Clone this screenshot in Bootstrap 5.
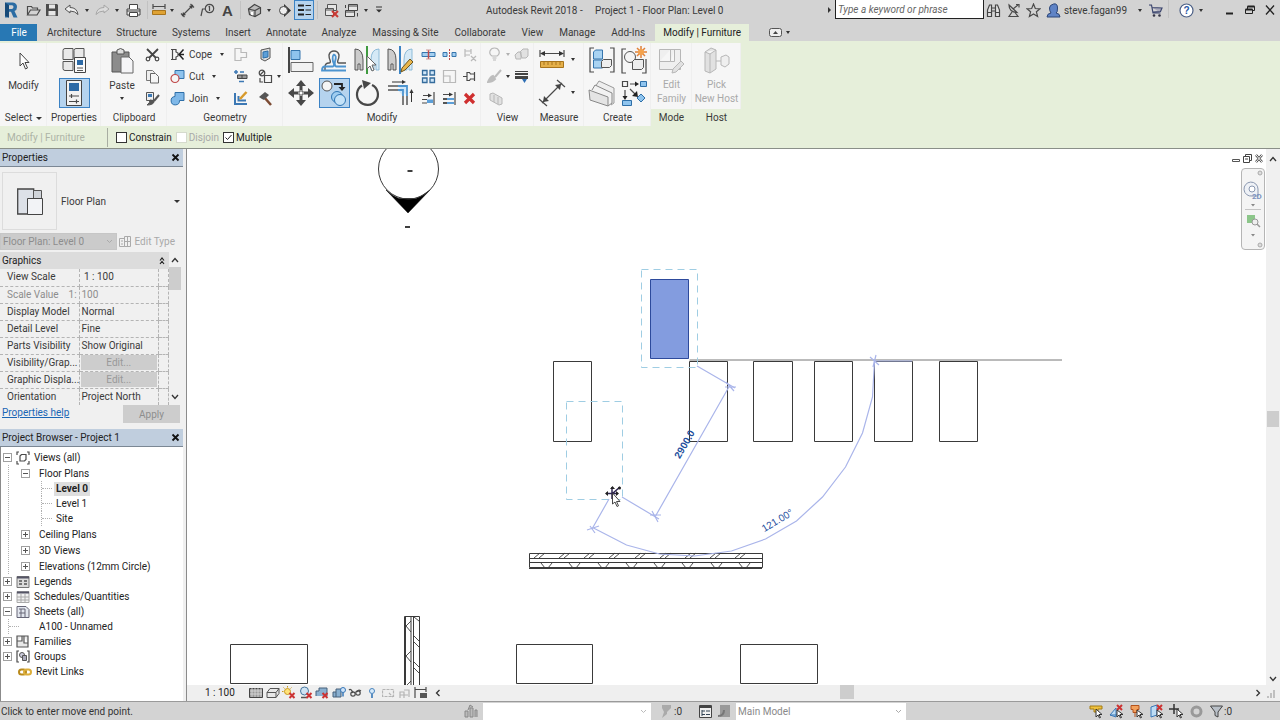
<!DOCTYPE html>
<html lang="en">
<head>
<meta charset="utf-8">
<meta name="viewport" content="width=device-width, initial-scale=1">
<title>Autodesk Revit 2018 - Project 1 - Floor Plan: Level 0</title>
<link href="https://cdn.jsdelivr.net/npm/bootstrap@5.3.0/dist/css/bootstrap.min.css" rel="stylesheet">
<style>
:root{--chrome:#d3d3d3;--ctx:#e6efda;--panel:#f6f6f6;--ink:#3a3a3a;--dim:#a9a9a9}
body{font:10px/15px Roboto,"Open Sans",sans-serif;color:var(--ink);background:#f0f0f0;overflow:hidden}
button{font:inherit;color:inherit;background:none;border:0;padding:0}
svg{display:block;flex:none}
.tri{display:block;width:0;height:0;border:3px solid transparent;border-top-color:#333;border-bottom:0;flex:none}
.tri-sm{border-width:2px;border-top-width:3px}
.i15{width:15px;height:15px}
.i28{width:28px;height:28px}
.s{fill:none;stroke:#4a4a4a;stroke-width:1.2}
.off{opacity:.35}
/* title bar */
.titlebar{height:24px;background:var(--chrome)}
.qat>button,.acct>button{height:20px;width:20px;display:flex;align-items:center;justify-content:center}
.qat .w-c,.acct .w-c{width:10px}
.qat .w-l{width:22px}
.qat .w-s{width:16px}
.acct .first-win{margin-left:14px}
.vsep{width:7px;height:18px;background:linear-gradient(#c2c2c2,#c2c2c2) 3px 0/1px 100% no-repeat}
.picked{background:#b5d3ee;box-shadow:inset 0 0 0 1px #3b82c4}
.apptitle{left:486px;top:3px;white-space:pre}
.search{width:149px;height:19px;border:1px solid #222;border-top:0;font:italic 10px Roboto,sans-serif;padding:0 2px;background:#fff}
.search::placeholder{color:#666;opacity:1}
/* tabs */
.tabs{height:17px;background:var(--chrome)}
.tabs a{display:block;padding:1px 8px 0;line-height:16px;height:17px;color:var(--ink);text-decoration:none}
.tabs a:nth-child(-n+6){padding-right:7px}
.tabs .file{width:37px;background:#2878b4;color:#fff;text-align:center;margin-right:2px}
.tabs .now{background:var(--ctx);margin-left:2px;color:#222}
/* ribbon */
.ribbon{background:var(--ctx);height:85px;padding-top:2px}
.pnl{background:var(--panel);box-shadow:inset -1px 0 #efefef;display:flex;flex-direction:column;align-items:center}
.tools{height:66px;width:100%;display:grid;grid-auto-flow:column;grid-template-rows:repeat(6,11px);justify-content:center;align-items:center;justify-items:center}
.tools>*{grid-row:span 2}
.tools>.big{grid-row:span 3}
.tools>.tall{grid-row:span 6}
.cap{line-height:16px;padding-top:1px;white-space:nowrap}
.big.picked{width:31px;height:30px;display:flex;align-items:center;justify-content:center}
.gl{display:flex;align-items:center;gap:4px;justify-self:start}
.stack{height:66px;padding-top:1px;display:flex;flex-direction:column;align-items:center}
.stack .pic{height:34px;display:flex;align-items:center}
.muted{color:var(--dim)}
.ctx .cap{background:var(--ctx);width:100%;text-align:center}
.ctx .stack{line-height:14px;text-align:center}
/* options bar */
.opts{background:var(--ctx);height:23px;padding-top:1px;border-bottom:1px solid #8a8f88;color:#222}
.opts .mode{width:108px;padding-left:7px;border-right:1px solid #a8ada2;height:19px;line-height:19px;color:#adb3a6}
.opts input{appearance:none;width:11px;height:11px;border:1px solid #333;background:#fff;margin:0 2px 0 0}
.opts input:disabled{border-color:#d5dacd}
.opts input:checked{background:#fff url("data:image/svg+xml,%3Csvg xmlns='http://www.w3.org/2000/svg' viewBox='0 0 9 9'%3E%3Cpath d='M1.5 4.5l2 2 4-4.5' fill='none' stroke='%23222'/%3E%3C/svg%3E")}
.opts .chk{display:flex;align-items:center}
/* palettes */
.side{width:187px;border-right:1px solid #8b8b8b;padding-right:3px;background:#f0f0f0}
.phead{height:18px;background:#c0cede;border-bottom:1px solid #7b8794;padding:0 3px 0 2px;line-height:17px;color:#222}
.typebox{padding:5px 3px 3px 2px;height:66px}
.typebox .frame{width:55px;height:58px;border:1px solid #dcdcdc}
.lvl{width:117px;height:17px;border:1px solid #c6c6c6;background:#cbcbcb;color:#8d8d8d;padding:0 2px;font:inherit;appearance:none;border-radius:0;opacity:1}
.gridbox{padding:2px 2px 0 0}
.grp{background:#dcdcdc;height:17px;line-height:17px;padding:0 4px 0 2px;color:#222}
.props{width:100%;table-layout:fixed;border-collapse:collapse}
.props th,.props td{height:17px;line-height:16px;padding:0 0 0 2px;font-weight:400;border-bottom:1px dashed #b4b4b4;white-space:nowrap}
.props th{width:79px;padding-left:7px;border-right:1px dashed #b4b4b4}
.props td:last-child{width:10px;border:1px dashed #b4b4b4;border-top:0}
.props .ro{color:#8d8d8d}
.props .ed{padding:0 1px}
.props .ed button{display:block;width:100%;height:15px;line-height:15px;background:#cdcdcd;color:#999}
.props tr:last-child>*{border-bottom:0}
.sbar{width:14px;background:#f0f0f0}
.thumb{background:#cdcdcd}
.applyb{width:57px;height:18px;background:#cdcdcd;color:#8d8d8d}
.helprow{padding:0 3px 6px 2px}
.helprow a{color:#1a66b5}
.tree{background:#fff;border-left:1px solid #8b8b8b;padding:3px 0 0 2px;color:#222}
.tree ul{list-style:none;margin:0;padding:0}
.tree li>div{display:flex;align-items:center;height:15px;gap:4px}
.tree .kids{margin-left:5px;border-left:1px dotted #b0b0b0;padding-left:12px}
.tree li>.fold{height:16px}
.tree .leaf{padding-left:14px;margin-left:5px;border-left:1px dotted #b0b0b0}
.tree .kids .leaf{margin-left:20px}
.tree .leaf::before{content:"";width:10px;border-top:1px dotted #b0b0b0;margin-left:-14px}
.tree .lnk{padding-left:15px}
.pm{width:9px;height:9px;border:1px solid #a0a0a0;background:linear-gradient(#555,#555) center/5px 1px no-repeat #fff;flex:none}
.pm.plus{background:linear-gradient(#555,#555) center/5px 1px no-repeat,linear-gradient(#555,#555) center/1px 5px no-repeat #fff}
.tree .fold .pm{margin-right:5px}
.hot{background:#dedede;font-weight:700;padding:0 2px;margin-left:-2px;line-height:14px}
/* drawing area */
.plan{background:#fff;min-width:0}
.plan svg.draw{position:absolute;inset:0;width:100%;height:100%}
.draw .ln{fill:none;stroke:#3a3a3a}
.draw .dm{fill:none;stroke:#aab5ea;stroke-width:1.2}
.draw .sel{fill:none;stroke:#9fcde3;stroke-dasharray:7 5}
.draw text{font-family:"Liberation Sans",Arial,sans-serif;fill:#1f4f9e}
.mdi{right:4px;top:5px;width:30px;gap:3px}
.wheel{right:1px;top:19px;width:24px;border:1px solid #b5b5b5;border-radius:4px;background:#f4f4f4;height:82px}
.vcb{height:16px;background:#efefef;color:#222}
.vcb>button{width:16px;height:15px;display:flex;align-items:center;justify-content:center}
.vcb>button:nth-child(even){margin-right:1px}
.scale{width:61px;padding-left:18px;white-space:nowrap}
/* status bar */
.status{height:19px;padding-top:1px;background:var(--chrome);border-top:1px solid #9a9a9a;color:#333}
.status select{height:17px;border:0;background:#fff;color:#8a8a8a;font:inherit;padding:0 2px;appearance:none;border-radius:0;opacity:1}
.status .picks{gap:5px}
.w-ws{width:168px}.w-mm{width:170px}
.msg{width:464px;padding-left:1px}
.chev{position:absolute;right:4px;top:6px;pointer-events:none}
</style>
</head>
<body class="d-flex flex-column vh-100">

<header class="titlebar d-flex align-items-start position-relative flex-shrink-0">
  <div class="qat d-flex align-items-center">
    <button class="w-l" aria-label="Revit"><svg width="14" height="18" viewBox="0 0 14 18"><path d="M1 1.500h8q4 .5 4 4.500 0 3-2.500 4l3 6.500H9.500L7 10.800H5V16.500H1z" fill="#2b6ca3"/><path d="M5 4.200h3q1.500.2 1.500 1.900T8 8H5z" fill="#d3d3d3"/><path d="M1 1.500l4 2.700V16.500l-4-1.500z" fill="#174a78"/></svg></button>
    <button class="w-l" aria-label="Open"><svg class="i15" viewBox="0 0 15 15"><path class="s" d="M1.500 12V3.500h4l1 1.500h5v2M1.500 12l3-5h9.500l-3 5z"/></svg></button>
    <button class="w-s" aria-label="Save"><svg width="14" height="14" viewBox="0 0 14 14"><path d="M1 1h11l1 1v11H1z" fill="#4c4c4c"/><path d="M4 1.500h6v4H4zM3.500 8h7v4.500h-7z" fill="#e6e6e6"/></svg></button>
    <button class="w-l" aria-label="Undo"><svg class="i15" viewBox="0 0 15 15"><path d="M1 6l5-4v2.500q7 0 8 7-3-3.500-8-3.500V10z" fill="#eee" stroke="#555"/></svg></button>
    <button class="w-c" aria-label="Undo list"><i class="tri tri-sm"></i></button>
    <button class="off" aria-label="Redo"><svg class="i15" viewBox="0 0 15 15"><path d="M14 6L9 2v2.500q-7 0-8 7 3-3.500 8-3.500V10z" fill="#eee" stroke="#555"/></svg></button>
    <button class="w-c" aria-label="Redo list"><i class="tri tri-sm"></i></button>
    <button class="w-l" aria-label="Print"><svg class="i15" viewBox="0 0 15 15"><path d="M1 6h13v6H1z" fill="#e8e8e8" stroke="#444"/><path d="M3.500 6V1.500h8V6M3.500 9.500h8v4h-8z" fill="#fff" stroke="#444"/><path d="M1 8h13" stroke="#444"/></svg></button>
    <span class="vsep"></span>
    <button class="w-s" aria-label="Measure"><svg width="14" height="12" viewBox="0 0 14 12"><path d="M1 0v5M13 0v5M1 2.500h12" class="s"/><path d="M.5 6.500h13v4H.5z" fill="#dfa233" stroke="#a8741c"/></svg></button>
    <button class="w-c" aria-label="Measure list"><i class="tri tri-sm"></i></button>
    <button aria-label="Aligned dimension"><svg class="i15" viewBox="0 0 15 15"><path class="s" d="M2 13L13 2M1 10.500l3.500 3.500M10.500 1l3.500 3.500"/><path d="M2 13l1-4 3 3zM13 2l-1 4-3-3z" fill="#444"/></svg></button>
    <button aria-label="Tag"><svg class="i15" viewBox="0 0 15 15"><circle class="s" cx="9.500" cy="5.500" r="4.200"/><path class="s" d="M1 13l1.500-7h3M8.500 4l1-.5v4.500"/></svg></button>
    <button aria-label="Text"><svg class="i15" viewBox="0 0 15 15"><text x="2" y="13" font-size="15" font-weight="700" fill="#444" font-family="Liberation Sans">A</text></svg></button>
    <span class="vsep"></span>
    <button aria-label="3D view"><svg class="i15" viewBox="0 0 15 15"><path d="M1.500 6L7.500 1.500l6 3v6L8 13.500l-5.500-2z" fill="#bbb" stroke="#444" stroke-width="1.200"/><path d="M1.500 6L8 7.500l5.500-3M8 7.500v6" class="s"/><path d="M4 9h2v3.500l-2-.7z" fill="#fff"/></svg></button>
    <button class="w-c" aria-label="3D list"><i class="tri tri-sm"></i></button>
    <button aria-label="Section"><svg class="i15" viewBox="0 0 15 15"><path d="M7 1l7 6.500L7 14z" fill="#333"/><circle cx="6.500" cy="7.500" r="4" fill="#eee" stroke="#444"/></svg></button>
    <button class="picked" aria-label="Thin lines"><svg class="i15" viewBox="0 0 15 15"><path d="M1 2.500h6M1 7h6M1 11.500h6" stroke="#222" stroke-width="2"/><path d="M8.500 2.500H14M8.500 7H14M8.500 11.500H14" stroke="#222"/></svg></button>
    <span class="vsep"></span>
    <button aria-label="Close hidden windows"><svg class="i15" viewBox="0 0 15 15"><path d="M3.500 1.500h9v6h-9z" fill="#e6e6e6" stroke="#555"/><path d="M1.500 5.500h8v7h-8zM1.500 7h8" fill="#e6e6e6" stroke="#555"/><path d="M8 8l6 6M14 8l-6 6" stroke="#c93a34" stroke-width="2"/></svg></button>
    <button aria-label="Switch windows"><svg class="i15" viewBox="0 0 15 15"><path d="M4.500 1.500h9v6h-9zM4.500 3h9" fill="#e6e6e6" stroke="#444"/><path d="M1.500 7.500h9v6h-9zM1.500 9h9" fill="#e6e6e6" stroke="#444"/><path d="M1.500 2v3M13.500 10v3.500" stroke="#444"/></svg></button>
    <button class="w-c" aria-label="Switch list"><i class="tri tri-sm"></i></button>
    <button class="w-s" aria-label="Customize"><svg width="8" height="8" viewBox="0 0 8 8"><path d="M1 1h6" stroke="#333"/><path d="M1 3.500h6l-3 3z" fill="#333"/></svg></button>
  </div>
  <div class="apptitle position-absolute">Autodesk Revit 2018 -     Project 1 - Floor Plan: Level 0</div>
  <div class="acct d-flex align-items-start ms-auto">
    <button class="w-c" aria-label="Expand search"><svg width="5" height="8" viewBox="0 0 5 8"><path d="M1 1l3 3-3 3z" fill="#333"/></svg></button>
    <input class="search" type="text" placeholder="Type a keyword or phrase" aria-label="Search">
    <button aria-label="Find"><svg class="i15" viewBox="0 0 15 15"><path d="M1.500 13.500V7l2-5h2v11.500zM13.500 13.500V7l-2-5h-2v11.500zM5.500 5h4M5.500 8h4M1.500 9.500h4M9.500 9.500h4" fill="#e2e2e2" stroke="#444" stroke-width="1.200"/></svg></button>
    <button aria-label="Communication"><svg class="i15" viewBox="0 0 15 15"><path class="s" d="M3 2q0 7 8 7.500zM7 6l5-4M10 1.500h3v3M6 9l-3 4.500h9L9 9.500"/></svg></button>
    <button aria-label="Favorites"><svg class="i15" viewBox="0 0 15 15"><path class="s" d="M7.500 1l1.800 4.500 4.700.3-3.600 3 1.200 4.700-4.100-2.600-4.100 2.600 1.200-4.700-3.600-3 4.700-.3z"/></svg></button>
    <button aria-label="Account"><svg class="i15" viewBox="0 0 15 15"><path d="M1 14q0-3.500 4-4-1.500-2-1.500-5T7.500 1 11.500 5 10 10q4 .5 4 4z" fill="#5f83c6" stroke="#2d4678"/></svg></button>
    <button class="w-auto pe-1">steve.fagan99</button>
    <button class="w-c ms-1" aria-label="Account list"><i class="tri tri-sm"></i></button>
    <button aria-label="Store"><svg class="i15" viewBox="0 0 15 15"><path d="M1 2h2.500l1.500 8h7.500M4 4.500l10 .5-1.500 3.500-7.500.5" fill="#aab" stroke="#3c466e" stroke-width="1.200"/><circle cx="6" cy="12.500" r="1.300" fill="#334"/><circle cx="11.500" cy="12.500" r="1.300" fill="#334"/></svg></button>
    <span class="vsep"></span>
    <button class="ms-1" aria-label="Help"><svg class="i15" viewBox="0 0 15 15"><circle cx="7.500" cy="7.500" r="6.500" fill="#fff" stroke="#4b5f86" stroke-width="1.200"/><text x="4.500" y="11" font-size="10" font-weight="700" fill="#2657a6" font-family="Liberation Sans">?</text></svg></button>
    <button class="w-c" aria-label="Help list"><i class="tri tri-sm"></i></button>
    <button class="first-win" aria-label="Minimize"><svg width="12" height="12" viewBox="0 0 12 12"><path d="M2 9.500h7" stroke="#222" stroke-width="2"/></svg></button>
    <button aria-label="Restore"><svg width="12" height="12" viewBox="0 0 12 12"><path d="M1.500 5.500h7v4h-7zM3.500 5V2.500h7v4H9" fill="none" stroke="#222"/><path d="M3.500 2.500h7M1.500 5.500h7" stroke="#222" stroke-width="2"/></svg></button>
    <button aria-label="Close"><svg width="12" height="12" viewBox="0 0 12 12"><path d="M2 1.500l8 9M10 1.500l-8 9" stroke="#222" stroke-width="1.300"/></svg></button>
  </div>
</header>

<nav class="tabs d-flex flex-shrink-0" aria-label="Ribbon tabs">
  <a href="#" class="file">File</a><a href="#">Architecture</a><a href="#">Structure</a><a href="#">Systems</a><a href="#">Insert</a><a href="#">Annotate</a><a href="#">Analyze</a><a href="#">Massing &amp; Site</a><a href="#">Collaborate</a><a href="#">View</a><a href="#">Manage</a><a href="#">Add-Ins</a><a href="#" class="now">Modify | Furniture</a>
  <button class="ms-3 d-flex align-items-center gap-1 ps-1" aria-label="Minimize ribbon"><svg width="13" height="9" viewBox="0 0 13 9"><rect x=".5" y=".5" width="12" height="8" rx="2" fill="#eee" stroke="#555"/><path d="M4 6l2.500-3L9 6z" fill="#444"/></svg><i class="tri tri-sm"></i></button>
</nav>

<section class="ribbon d-flex flex-shrink-0" aria-label="Ribbon">
  <div class="pnl" style="width:47px">
    <button class="stack"><span class="pic"><svg width="16" height="20" viewBox="0 0 16 20"><path d="M4 2v13l3-3 2.500 6 2-1-2.500-5.500h4z" fill="#fff" stroke="#444"/></svg></span><span>Modify</span></button>
    <button class="cap d-flex align-items-center gap-1">Select <i class="tri"></i></button>
  </div>
  <div class="pnl" style="width:54px">
    <div class="tools">
      <button class="big" aria-label="Type properties"><svg class="i28" viewBox="0 0 28 28"><g fill="#e9e9e9" stroke="#555"><path d="M3 4.500q0-2 2-2h8v11H3zM14 4.500q0-2 2-2h8v11H14zM3 15.500h10v9H5q-2 0-2-2z"/></g><path d="M14.500 11.500h11v15h-11z" fill="#fafafa" stroke="#444"/><path d="M17 14h6v5h-6z" fill="#2d6aa6"/><path d="M17 22h6M17 24.500h6" stroke="#555"/></svg></button>
      <button class="big picked" aria-label="Properties"><svg width="22" height="28" viewBox="0 0 22 28"><path d="M3.500 1.500h15v25h-15z" fill="#f2f2f2" stroke="#444"/><path d="M6 4h10v8H6z" fill="#2d6aa6"/><path d="M6 17h10M6 22.500h10M8.500 15v4M13.500 20.500v4" class="s"/></svg></button>
    </div>
    <div class="cap">Properties</div>
  </div>
  <div class="pnl" style="width:66px">
    <div class="tools" style="grid-template-columns:37px 24px">
      <button class="tall stack"><span class="pic"><svg class="i28" viewBox="0 0 28 28"><path d="M4 5h17v20H4z" fill="#8c8c8c" stroke="#555"/><path d="M9 7V3q3.500-3 7 0v4z" fill="#ddd" stroke="#555"/><path d="M13 10h8l4 4v12H13z" fill="#f5f5f7" stroke="#666"/></svg></span><span>Paste</span><i class="tri tri-sm mt-1"></i></button>
      <button aria-label="Cut to clipboard"><svg class="i15" viewBox="0 0 15 15"><path d="M2 2l9 9M13 2l-9 9" stroke="#444" stroke-width="1.800"/><circle class="s" cx="3" cy="12" r="1.800"/><circle class="s" cx="12" cy="12" r="1.800"/></svg></button>
      <button aria-label="Copy to clipboard"><svg class="i15" viewBox="0 0 15 15"><path d="M1.500 1.500h6l2 2v8h-8z" fill="#eee" stroke="#777"/><path d="M5.500 4.500h5l3 3v6.500h-8z" fill="#f5f5f5" stroke="#666"/></svg></button>
      <button aria-label="Match type"><svg class="i15" viewBox="0 0 15 15"><path d="M1.500 1.500h7v8h-7z" fill="#eee" stroke="#555"/><path d="M3 3h4v3H3z" fill="#3c78b4"/><path d="M14 4l-5 6" stroke="#555" stroke-width="2"/><path d="M5 9q5 0 4 2-1 3-7 3 3-2 3-5z" fill="#555" stroke="#555"/></svg></button>
    </div>
    <div class="cap">Clipboard</div>
  </div>
  <div class="pnl" style="width:116px">
    <div class="tools" style="grid-template-columns:60px 20px 30px">
      <button class="gl"><svg class="i15" viewBox="0 0 15 15"><path d="M1 2.500h5M1 12.500h5M2.500 2.500v10M6 2v3l2 1v3l-2 1v3" class="s" stroke-width="1.600"/><path d="M13.500 2.500L9 7.500l4.500 5M9 7.500h5" stroke="#222" stroke-width="1.500" fill="none"/></svg>Cope <i class="tri tri-sm ms-1"></i></button>
      <button class="gl"><svg class="i15" viewBox="0 0 15 15"><path d="M5 1.500h9v8H5z" fill="#8fc4ee" stroke="#3575ad"/><circle cx="5" cy="9.500" r="4" fill="#f6f6f6" stroke="#c0494a" stroke-width="1.200"/></svg>Cut <i class="tri tri-sm ms-1"></i></button>
      <button class="gl"><svg class="i15" viewBox="0 0 15 15"><path d="M5 1.500h9v8H9.500A4.200 4.200 0 1 1 5 5.500z" fill="#7fb8e8" stroke="#2e6fa8"/></svg>Join <i class="tri tri-sm ms-1"></i></button>
      <button class="off" aria-label="Wall joins"><svg class="i15" viewBox="0 0 15 15"><path class="s" d="M2 1.500h6v4h5.500v5H8v3H2z"/></svg></button>
      <button aria-label="Beam joins"><svg class="i15" viewBox="0 0 15 15"><path d="M1 3h4M3 1v4" stroke="#3c78b4" stroke-width="1.500"/><path d="M7 3h4M6 12.500h5" stroke="#3c78b4" stroke-width="1.500"/><path d="M4.500 6h9.500v3.500H4.500zM9 6v3.500" fill="#999" stroke="#444"/></svg></button>
      <button aria-label="Wall opening"><svg class="i15" viewBox="0 0 15 15"><path d="M2 2v11h12M5.500 5v4.500H13" fill="none" stroke="#3c78b4" stroke-width="2"/><path d="M13.500 1L7 8" stroke="#d79a2c" stroke-width="2.500"/></svg></button>
      <button class="justify-self-start" aria-label="Split face"><svg class="i15" viewBox="0 0 15 15"><path d="M3 3l9-2v10l-5 3-4-2z" fill="#ddd" stroke="#555"/><path d="M5 5l5-1v6l-5 1z" fill="#5c9fd8" stroke="#2e6fa8"/></svg></button>
      <button class="d-flex align-items-center gap-1 ps-2" aria-label="Paint"><svg class="i15" viewBox="0 0 15 15"><circle class="s" cx="4" cy="4" r="2.800"/><path class="s" d="M6.500 6.500h7v7h-7zM2 9v4h3M2 6l4-4"/></svg><i class="tri tri-sm"></i></button>
      <button aria-label="Demolish"><svg class="i15" viewBox="0 0 15 15"><path d="M6 6l7 8" stroke="#7c4b34" stroke-width="2.500"/><path d="M1 6l6-5 4 3-5 5-2-1z" fill="#555"/></svg></button>
    </div>
    <div class="cap">Geometry</div>
  </div>
  <div class="pnl" style="width:198px">
    <div class="tools" style="grid-template-columns:33px 33px 33px 33px 23px 20px 20px">
      <button class="big" aria-label="Align"><svg class="i28" viewBox="0 0 28 28"><path d="M2 1v26" stroke="#444" stroke-width="2"/><path d="M4 4.500h9v9H4z" fill="#8fc4ee" stroke="#3575ad"/><path d="M4 16.500h22v9H4z" fill="#f2f2f2" stroke="#666"/></svg></button>
      <button class="big" aria-label="Move"><svg class="i28" viewBox="0 0 28 28"><path d="M14 1l5 6h-3.500v4h-3V7H9zM14 27l5-6h-3.500v-4h-3v4H9zM1 14l6-5v3.500h4v3H7V19zM27 14l-6-5v3.500h-4v3h4V19z" fill="#484848"/><path d="M12 12h4v4h-4z" fill="#fff" stroke="#484848"/></svg></button>
      <button class="big" aria-label="Offset"><svg class="i28" viewBox="0 0 28 28"><path d="M26 17h-7q-2 0-1-3 1-2 1-5-1-4-5-4t-5 4q0 3 1 5 1 3-1 3-4 0-4 4v3" fill="none" stroke="#555" stroke-width="1.400"/><path d="M26 24.500H2q0-4 3-4h8q2-1 0-5-1-6 1-7 3 1 1 7-1 4 1 5h10" fill="none" stroke="#4d94cf" stroke-width="1.800"/></svg></button>
      <button class="big picked" aria-label="Copy"><svg class="i28" viewBox="0 0 28 28"><circle cx="7" cy="7" r="5" fill="#f5f5f5" stroke="#555"/><path d="M14 5h8v4" fill="none" stroke="#222" stroke-width="1.800"/><path d="M18.500 8h7L22 12z" fill="#222"/><circle cx="17" cy="18" r="5.500" fill="#9fcdf0" stroke="#2e76b5"/><circle cx="20" cy="21" r="5.500" fill="#c4e2f8" stroke="#2e76b5"/></svg></button>
      <button class="big" aria-label="Mirror by axis"><svg class="i28" viewBox="0 0 28 28"><path d="M2 3q8 0 8 11v10H7v-6H5v6H2z" fill="#ccc" stroke="#555"/><path d="M26 3q-8 0-8 11v10h3v-6h2v6h3z" fill="#d5e9f6" stroke="#8dbbd8"/><path d="M14 0v28" stroke="#3f9b3f" stroke-width="2"/><path d="M14 10v13l3-3 2 5 2-1-2-5h4z" fill="#fff" stroke="#666"/></svg></button>
      <button class="big" aria-label="Rotate"><svg class="i28" viewBox="0 0 28 28"><path d="M19 6A10.500 10.500 0 1 1 9 6.500" fill="none" stroke="#484848" stroke-width="2.200"/><path d="M9 1l9 3-7 6z" fill="#484848"/></svg></button>
      <button class="big" aria-label="Mirror by line"><svg class="i28" viewBox="0 0 28 28"><path d="M2 3q8 0 8 11v10H7v-6H5v6H2z" fill="#ccc" stroke="#555"/><path d="M26 3q-8 0-8 11v10h3v-6h2v6h3z" fill="#d5e9f6" stroke="#8dbbd8"/><path d="M14 0v28" stroke="#3c84c4" stroke-width="2"/><path d="M15 26l1-4 8-9 3 3-8 8z" fill="#e8b64c" stroke="#6d5520"/></svg></button>
      <button class="big" aria-label="Trim to corner"><svg class="i28" viewBox="0 0 28 28"><path d="M2 7h12M2 11h12M17 17v9M21 17v9" stroke="#555" stroke-width="1.500"/><path d="M12 7h9v10M12 11h5v6" fill="#cfe6f8" stroke="#4d94cf" stroke-width="1.800"/><path d="M6 3h11M25.500 23V13" stroke="#333"/><path d="M16 1l4 2-4 2zM23.500 14l2-4 2 4z" fill="#333"/></svg></button>
      <button aria-label="Split element"><svg class="i15" viewBox="0 0 15 15"><path d="M1 5.500h13v4H1z" fill="#a4cff0" stroke="#3575ad"/><path d="M7.500 3v9" stroke="#c0494a" stroke-width="1.500"/><path d="M5 3h5M5 12h5" stroke="#c99"/></svg></button>
      <button aria-label="Array"><svg class="i15" viewBox="0 0 15 15"><path d="M1.500 1.500h4.500v4.500H1.500zM9 1.500h4.500v4.500H9zM1.500 9h4.500v4.500H1.500zM9 9h4.500v4.500H9z" fill="#cfe6f8" stroke="#356c9c" stroke-width="1.300"/></svg></button>
      <button aria-label="Trim single"><svg class="i15" viewBox="0 0 15 15"><path d="M2 4.500h6M1 8.500h5M1 12h5M13 1v13" class="s"/><path d="M7 2.500l4 2-4 2z" fill="#333"/><path d="M6 8.500h6v3.500H6z" fill="#5c9fd8"/></svg></button>
      <button aria-label="Split with gap"><svg class="i15" viewBox="0 0 15 15"><path d="M1 5.500h4v4H1zM10 5.500h4v4h-4z" fill="#a4cff0" stroke="#3575ad"/><path d="M7.500 2v11" stroke="#c0494a" stroke-dasharray="2 1"/></svg></button>
      <button class="off" aria-label="Scale"><svg class="i15" viewBox="0 0 15 15"><path class="s" d="M1.500 1.500h12v12h-12zM1.500 7h6.500v6.500"/></svg></button>
      <button aria-label="Trim multiple"><svg class="i15" viewBox="0 0 15 15"><path d="M1 3.500h7M13 1v13" class="s"/><path d="M7 1.500l4 2-4 2z" fill="#333"/><path d="M1 8h11M1 12h11" stroke="#5c9fd8" stroke-width="2"/><path d="M1 8h4M1 12h4" stroke="#555" stroke-width="2"/></svg></button>
      <button class="off" aria-label="Unpin"><svg class="i15" viewBox="0 0 15 15"><path class="s" d="M3 2v8M3 4h6M3 8h5M9 2v5M9 9l5 5M14 9l-5 5"/></svg></button>
      <button aria-label="Pin"><svg class="i15" viewBox="0 0 15 15"><path class="s" d="M12.500 3v9M12.500 5h-4l-1-1.500H5v8h2.500l1-1.500h4M5 7.500H1" fill="#eee"/></svg></button>
      <button aria-label="Delete"><svg class="i15" viewBox="0 0 15 15"><path d="M3 3l9 9M12 3l-9 9" stroke="#cf2f2f" stroke-width="3.200"/></svg></button>
    </div>
    <div class="cap">Modify</div>
  </div>
  <div class="pnl" style="width:53px">
    <div class="tools" style="grid-template-columns:27px 22px">
      <button class="d-flex align-items-center gap-1 off ps-1" aria-label="Hide in view"><svg class="i15" viewBox="0 0 15 15"><path class="s" d="M5 9Q2 7 3 4t4.500-3T12 4t-2 5zM5.500 11h4M6 13h3"/></svg><i class="tri tri-sm"></i></button>
      <button class="d-flex align-items-center gap-1 ps-1" aria-label="Override graphics"><svg class="i15 off" viewBox="0 0 15 15"><path d="M14 1L8 8M1 13q4 0 7-3L6 7q-3 1-5 6z" fill="#555" stroke="#555" stroke-width="2"/></svg><i class="tri tri-sm"></i></button>
      <button class="off" aria-label="Linework"><svg class="i15" viewBox="0 0 15 15"><path d="M1 3l3-1 9 5v6l-3 1-9-5zM5 4v7M9 6v7" fill="#bbb" stroke="#444"/></svg></button>
      <button class="off" aria-label="Displace"><svg class="i15" viewBox="0 0 15 15"><path d="M1 8l3-3h3v7H2zM6 5l3-3h5v7l-2 2H8z" fill="#bbb" stroke="#444"/></svg></button>
      <button aria-label="Line weights"><svg class="i15" viewBox="0 0 15 15"><path d="M1 2.500h13" stroke="#444"/><path d="M1 5h13" stroke="#444" stroke-width="2"/><path d="M1 8.500h13" stroke="#444" stroke-width="3"/><path d="M8 10h5l-2.500 4z" fill="#2e6fb5"/></svg></button>
    </div>
    <div class="cap">View</div>
  </div>
  <div class="pnl" style="width:50px">
    <div class="tools" style="grid-template-columns:28px 14px">
      <button class="big" aria-label="Measure distance"><svg class="i28" viewBox="0 0 28 28"><path d="M2 4v7M26 4v7M3 7.500h22" class="s"/><path d="M2 7.500l5-2.500v5zM26 7.500L21 5v5z" fill="#333"/><path d="M2.500 15.500h23v6h-23z" fill="#e5b04a" stroke="#a8741c"/><path d="M6 16v3M10 16v3M14 16v3M18 16v3M22 16v3" stroke="#a8741c"/></svg></button>
      <button class="big" aria-label="Dimension"><svg class="i28" viewBox="0 0 28 28"><path class="s" d="M4 24L24 4M1 20l8 7M19 1l8 7"/><path d="M5 23l1-6 5 5zM23 5l-1 6-5-5z" fill="#444"/></svg></button>
      <button class="big" aria-label="Measure list"><i class="tri tri-sm"></i></button>
      <button class="big" aria-label="Dimension list"><i class="tri tri-sm"></i></button>
    </div>
    <div class="cap">Measure</div>
  </div>
  <div class="pnl" style="width:67px">
    <div class="tools" style="grid-template-columns:32px 32px">
      <button class="big" aria-label="Create group"><svg class="i28" viewBox="0 0 28 28"><path class="s" d="M6 2H2v24h4M22 2h4v24h-4" stroke-width="1.600"/><path d="M5.500 6l2-2h7v9h-9zM5.500 14h9v8h-9z" fill="#a9d3f2" stroke="#3575ad"/><path d="M13.500 15.500l2-2h8v6l-2 2h-8z" fill="#eee" stroke="#555"/></svg></button>
      <button class="big" aria-label="Create assembly"><svg class="i28" viewBox="0 0 28 28"><path d="M7 8l4-6 15 7v15l-3 2" fill="#eee" stroke="#999"/><path d="M4 11l3-5 17 8v10l-4 3" fill="#f2f2f2" stroke="#888"/><path d="M1 11l19 7v9L2 21z" fill="#e4e4e4" stroke="#888"/></svg></button>
      <button class="big" aria-label="Create similar"><svg class="i28" viewBox="0 0 28 28"><path class="s" d="M6 3H2v24h4M26 13v14h-4" stroke-width="1.600"/><circle cx="10" cy="11" r="5.500" fill="#f4f4f4" stroke="#555"/><path d="M12.500 15.500l2-2h9v8l-2 2h-9z" fill="#eee" stroke="#555"/><path d="M21 0v12M15 6h12M17 2l8 8M25 2l-8 8" stroke="#e0813a" stroke-width="1.500"/><circle cx="21" cy="6" r="3" fill="#f4a24c"/></svg></button>
      <button class="big" aria-label="Create parts"><svg class="i28" viewBox="0 0 28 28"><path class="s" d="M2.500 2.500h5v5h-5zM10 5h6M5 11v8M10 10l6 6"/><path d="M15 2.500l4 2.500-4 2.500zM2.500 17l2.500 4 2.500-4zM17 12l1 6-6-1z" fill="#222"/><path d="M20.500 2.500h6v5h-6zM2.500 21.500h9v5h-9zM21 15l4 4-4 4-4-4z" fill="#8fc4ee" stroke="#2e6fa8"/></svg></button>
    </div>
    <div class="cap">Create</div>
  </div>
  <div class="pnl ctx" style="width:41px">
    <button class="stack muted" disabled><span class="pic"><svg class="i28 off" viewBox="0 0 28 28"><path d="M2.500 2.500h21v20h-21zM2.500 14.500h11v-12M13.500 14.500h4v-12" fill="#e4e4e4" stroke="#444"/><path d="M15 26l1-4 8-8 3 3-8 8z" fill="#bbb" stroke="#444"/></svg></span><span>Edit<br>Family</span></button>
    <div class="cap">Mode</div>
  </div>
  <div class="pnl ctx" style="width:49px">
    <button class="stack muted" disabled><span class="pic"><svg class="i28 off" viewBox="0 0 28 28"><path d="M3 5l6-4 5 2v19l-6 4-5-2zM3 5l5 2 6-4M8 7v19" fill="#bbb" stroke="#444"/><path d="M14 14h5M19 10l5-2 3 2v7l-4 3-4-2z" fill="#e4e4e4" stroke="#444"/></svg></span><span>Pick<br>New Host</span></button>
    <div class="cap">Host</div>
  </div>
</section>

<form class="opts d-flex align-items-center flex-shrink-0" onsubmit="return false">
  <div class="mode">Modify | Furniture</div>
  <div class="chk ms-2"><input type="checkbox" id="cons"><label for="cons">Constrain</label></div>
  <div class="chk ms-1 muted"><input type="checkbox" id="disj" disabled><label for="disj">Disjoin</label></div>
  <div class="chk ms-1"><input type="checkbox" id="mult" checked><label for="mult">Multiple</label></div>
</form>

<main class="d-flex flex-grow-1 overflow-hidden">
  <aside class="side d-flex flex-column flex-shrink-0">
    <section>
      <div class="phead d-flex justify-content-between align-items-center"><span>Properties</span><button aria-label="Close properties"><svg width="9" height="9" viewBox="0 0 9 9"><path d="M1.500 1.500l6 6M7.500 1.500l-6 6" stroke="#111" stroke-width="1.800"/></svg></button></div>
      <div class="typebox d-flex align-items-center">
        <div class="frame d-flex align-items-center justify-content-center"><svg width="26" height="27" viewBox="0 0 26 27"><path d="M.7 1h16v25h-16z" fill="#dde1e8" stroke="#444" stroke-width="1.300"/><path d="M16.500 2.500h8v8h-8z" fill="#d0d4da" stroke="#555"/><path d="M10.500 10.500h15v16h-15z" fill="#f2f3f6" stroke="#444"/></svg></div>
        <span class="ms-1">Floor Plan</span><i class="tri ms-auto"></i>
      </div>
      <div class="d-flex align-items-center justify-content-between pe-2">
        <div class="position-relative"><select class="lvl" disabled aria-label="Instance"><option>Floor Plan: Level 0</option></select><svg class="chev" width="7" height="5" viewBox="0 0 7 5"><path d="M1 1l2.500 2.500L6 1" fill="none" stroke="#aaa"/></svg></div>
        <button class="muted d-flex align-items-center gap-1" disabled><svg width="12" height="12" viewBox="0 0 12 12"><path d="M.5 2.500h5v8h-5zM5.500.5h6v5h-6zM5.500 5.500h6v5h-6zM2 5h2M2 8h2M8.500 0v11" fill="none" stroke="#aaa"/></svg>Edit Type</button>
      </div>
      <div class="gridbox d-flex">
        <div class="flex-grow-1 overflow-hidden">
          <div class="grp d-flex justify-content-between align-items-center"><span>Graphics</span><svg width="6" height="8" viewBox="0 0 6 8"><path d="M1 3.500L3 1l2 2.500M1 7l2-2.500L5 7" fill="none" stroke="#222" stroke-width="1.200"/></svg></div>
          <table class="props">
            <tr><th>View Scale</th><td>&nbsp;1 : 100</td><td></td></tr>
            <tr class="ro"><th>Scale Value &nbsp;&nbsp; 1:</th><td>100</td><td></td></tr>
            <tr><th>Display Model</th><td>Normal</td><td></td></tr>
            <tr><th>Detail Level</th><td>Fine</td><td></td></tr>
            <tr><th>Parts Visibility</th><td>Show Original</td><td></td></tr>
            <tr><th>Visibility/Grap...</th><td class="ed"><button>Edit...</button></td><td></td></tr>
            <tr><th>Graphic Displa...</th><td class="ed"><button>Edit...</button></td><td></td></tr>
            <tr><th>Orientation</th><td>Project North</td><td></td></tr>
          </table>
        </div>
        <div class="sbar d-flex flex-column align-items-center">
          <svg width="8" height="15" viewBox="0 0 8 15"><path d="M1 10l3-3.500L7 10" fill="none" stroke="#333" stroke-width="1.300"/></svg>
          <div class="thumb" style="width:12px;height:23px"></div>
          <svg class="mt-auto mb-1" width="8" height="8" viewBox="0 0 8 8"><path d="M1 2l3 3.500L7 2" fill="none" stroke="#333" stroke-width="1.300"/></svg>
        </div>
      </div>
      <div class="helprow d-flex justify-content-between"><a href="#">Properties help</a><button class="applyb">Apply</button></div>
    </section>
    <section class="d-flex flex-column flex-grow-1">
      <div class="phead d-flex justify-content-between align-items-center"><span>Project Browser - Project 1</span><button aria-label="Close browser"><svg width="9" height="9" viewBox="0 0 9 9"><path d="M1.500 1.500l6 6M7.500 1.500l-6 6" stroke="#111" stroke-width="1.800"/></svg></button></div>
      <div class="tree flex-grow-1">
        <ul>
          <li><div><i class="pm"></i><svg width="14" height="14" viewBox="0 0 14 14"><path d="M1 4V1h2M11 1h2v3M1 10v3h2M11 13h2v-3" class="s"/><path class="s" d="M4 5l1.500-1.500H10v5L8.500 10H4z"/></svg>Views (all)</div>
            <ul class="kids">
              <li><div class="fold"><i class="pm"></i>Floor Plans</div>
                <ul>
                  <li><div class="leaf"><span class="hot">Level 0</span></div></li>
                  <li><div class="leaf">Level 1</div></li>
                  <li><div class="leaf">Site</div></li>
                </ul></li>
              <li><div class="fold"><i class="pm plus"></i>Ceiling Plans</div></li>
              <li><div class="fold"><i class="pm plus"></i>3D Views</div></li>
              <li><div class="fold"><i class="pm plus"></i>Elevations (12mm Circle)</div></li>
            </ul></li>
          <li><div><i class="pm plus"></i><svg width="14" height="12" viewBox="0 0 14 12"><path d="M1 .5h12v11H1z" fill="#ddd" stroke="#777"/><path d="M1 1.500h12" stroke="#556" stroke-width="2"/><path d="M3 5h3M3 8h3M8 5h3M8 8h3" stroke="#777" stroke-width="2"/></svg>Legends</div></li>
          <li><div><i class="pm plus"></i><svg width="14" height="12" viewBox="0 0 14 12"><path d="M1 .5h12v11H1zM1 6h12M1 9h12M5 3v9M9 3v9" fill="#f2f2f2" stroke="#aaa"/><path d="M1 1.500h12" stroke="#556" stroke-width="2"/></svg>Schedules/Quantities</div></li>
          <li><div><i class="pm"></i><svg width="14" height="12" viewBox="0 0 14 12"><path d="M1 .5h9l3 3v8H1z" fill="#e2e6ee" stroke="#667"/><path d="M3 3h6v8M3 7h6M5 3v8" fill="none" stroke="#667"/></svg>Sheets (all)</div></li>
          <li><div class="leaf"><span class="ms-3">A100 - Unnamed</span></div></li>
          <li><div><i class="pm plus"></i><svg width="14" height="13" viewBox="0 0 14 13"><path d="M1 1h11v11H1zM1 6h5V1M8 1v7h4" fill="#e8e8e8" stroke="#555" stroke-width="1.200"/></svg>Families</div></li>
          <li><div><i class="pm plus"></i><svg width="14" height="13" viewBox="0 0 14 13"><path d="M3 1H1v11h2M11 1h2v11h-2" class="s"/><circle cx="6" cy="5" r="2.500" fill="#ccd" stroke="#555"/><path d="M6.500 5.500h4v5h-4z" fill="#aab" stroke="#555"/></svg>Groups</div></li>
          <li><div class="lnk"><svg width="14" height="8" viewBox="0 0 14 8"><rect x="1" y="1.500" width="7" height="5" rx="2.500" fill="none" stroke="#b98a1c" stroke-width="2"/><rect x="6" y="1.500" width="7" height="5" rx="2.500" fill="none" stroke="#dcae3a" stroke-width="2"/></svg>Revit Links</div></li>
        </ul>
      </div>
    </section>
  </aside>

  <div class="d-flex flex-column flex-grow-1 plan">
    <div class="d-flex flex-grow-1">
      <div class="position-relative flex-grow-1 overflow-hidden">
        <svg class="draw" role="img" aria-label="Floor plan drawing"><g transform="translate(-187 -149)">
          <g class="ln">
            <path d="M386 190l22 23 22-23-8 5.500-6 3h-17l-6-3z" fill="#000" stroke="#000" stroke-width=".5"/>
            <circle cx="408.500" cy="169" r="30"/>
            <path d="M407.500 171h5M405 227h5" stroke="#000" stroke-width="1.500"/>
            <path d="M689.500 360H1062" stroke="#777"/>
            <path d="M553.500 361.500h38v80h-38zM689.500 361.500h38v80h-38zM753.500 361.500h39v80h-39zM814.500 361.500h38v80h-38zM874.500 361.500h38v80h-38zM939.500 361.500h38v80h-38z"/>
            <path d="M230.500 644.500h77v39h-77zM516.500 644.500h76v39h-76zM740.500 644.500h77v39h-77z"/>
            <path d="M529.500 553.500h233v14h-233zM529 558.500h233M529 562.500h233M529 568.500h233"/>
            <path stroke-width=".9" d="M534 558l6-5m-1 5l6-5M559 558l6-5m-1 5l6-5M584 558l6-5m-1 5l6-5M609 558l6-5m-1 5l6-5M635 558l6-5m-1 5l6-5M660 558l6-5m-1 5l6-5M685 558l6-5m-1 5l6-5M710 558l6-5m-1 5l6-5M735 558l6-5m-1 5l6-5"/>
            <path stroke-width=".9" d="M541 563l4 5h3l4-5M569 563l4 5h3l4-5M598 563l4 5h3l4-5M626 563l4 5h3l4-5M654 563l4 5h3l4-5M682 563l4 5h3l4-5M711 563l4 5h3l4-5M739 563l4 5h3l4-5"/>
            <path d="M404.500 700v-83.500h15V700M405.500 617v83M411 617v83M413.500 617v83"/>
            <path stroke-width=".9" d="M411 621l-5 5 5 6M411 651l-5 5 5 6M411 681l-5 5M414 617l5 4M414 636l5 5M414 642l5 5M414 662l5 5M414 668l5 5"/>
          </g>
          <path d="M650.500 279.500h38v79h-38z" fill="#839cdf" stroke="#2d4a9c"/>
          <path class="sel" d="M641.500 269.500h56v98h-56zM566.500 401.500h56v98h-56z"/>
          <g class="dm">
            <path d="M874.500 361l-2 36-10 36-17 34-23 30-26 24-31 18-34 12-37 5-35-2-33-9-33-17M592 529l17-30M697 366l38 22M730 385l-75 132M622 497l37 22"/>
            <path d="M725 387h11M726 382l8 9M650 515h11M652 511l6 11M587 530l12-4M590 526l5 7M870 357l9 8M876 355l-3 12M875 361h37"/>
          </g>
          <text x="684" y="444" font-size="10" font-weight="700" text-anchor="middle" transform="rotate(-60 684 444) translate(0 4)">2900.0</text>
          <text x="777" y="520" font-size="10" text-anchor="middle" transform="rotate(-31 777 520) translate(0 4)">121.00°</text>
          <path d="M612 487v12M606 493.500h12M613 493l7-6" stroke="#2c2450" stroke-width="1.500"/><circle cx="619.500" cy="488" r="1.500" fill="#222"/><path d="M610 489h5l-2.500-3zM608 491v5l-3-2.500zM616 491v5l3-2.500z" fill="#222"/>
          <path d="M612.500 493v11l2.500-2 2 4.500 1.500-.7-2-4.300h3.500z" fill="#fff" stroke="#333" stroke-width=".9"/>
        </g></svg>
        <div class="mdi position-absolute d-flex"><button aria-label="Minimize view"><svg width="8" height="9" viewBox="0 0 8 9"><path d="M.5 5.500h7v2h-7z" fill="#fff" stroke="#555"/></svg></button><button aria-label="Restore view"><svg width="9" height="9" viewBox="0 0 9 9"><path d="M2.500 2V.5h6v6H7M.5 2.500h6v6h-6zM2 5h3" fill="#fff" stroke="#444"/></svg></button><button aria-label="Close view"><svg width="8" height="9" viewBox="0 0 8 9"><path d="M1 1l6 7M7 1L1 8" stroke="#444" stroke-width="2.400"/><path d="M1 1l6 7M7 1L1 8" stroke="#fff"/></svg></button></div>
        <div class="wheel position-absolute"><svg width="22" height="80" viewBox="0 0 22 80"><circle cx="18" cy="4" r="2" fill="#ddd" stroke="#aaa"/><circle cx="18" cy="76" r="2" fill="#ddd" stroke="#aaa"/><path d="M16 27H10a7 7 0 1 1 6-7z" fill="#eef1f6" stroke="#8a97b0"/><circle cx="10" cy="20" r="3" fill="#fff" stroke="#8a97b0"/><text x="10" y="30" font-size="8" font-weight="700" style="fill:#7d93c0">2D</text><path d="M9 35h4l-2 2.500zM9 65h4l-2 2.500z" fill="#888"/><path d="M3 40.500h16" stroke="#c4c4c4"/><path d="M5 46h8v8H5z" fill="#8cc68a"/><circle cx="13" cy="53" r="3" fill="#eee" stroke="#999"/><path d="M15 55l3 3" stroke="#999" stroke-width="1.500"/></svg></div>
      </div>
      <div class="sbar d-flex flex-column align-items-center pt-1">
        <svg width="8" height="12" viewBox="0 0 8 12"><path d="M1 8l3-3.500L7 8" fill="none" stroke="#333" stroke-width="1.300"/></svg>
        <div class="flex-grow-1"></div>
        <div class="thumb" style="width:12px;height:16px"></div>
        <div class="flex-grow-1"></div>
        <svg width="8" height="12" viewBox="0 0 8 12"><path d="M1 4l3 3.500L7 4" fill="none" stroke="#333" stroke-width="1.300"/></svg>
      </div>
    </div>
    <div class="vcb d-flex align-items-start flex-shrink-0">
      <span class="scale">1 : 100</span>
      <button aria-label="Detail level"><svg width="14" height="12" viewBox="0 0 14 12"><path d="M.5 1.500h13v9H.5z" fill="#999" stroke="#444"/><path d="M1 4h12M1 7h12M3 1v9M6 1v9M9 1v9M12 1v9" stroke="#ddd" stroke-width=".8"/></svg></button>
      <button aria-label="Visual style"><svg width="14" height="12" viewBox="0 0 14 12"><path d="M1 5.500l3-4h9v5l-3 4H1zM1 5.500h9v5M10 5.500l3-4" fill="#e8e8e8" stroke="#555"/></svg></button>
      <button aria-label="Sun path"><svg width="14" height="13" viewBox="0 0 14 13"><circle cx="5.500" cy="5.500" r="3" fill="#ffe27a" stroke="#c99a20"/><path d="M5.500 0v1.500M0 5.500h1.500M1.500 1.500l1 1M9.500 1.500l-1 1" stroke="#c99a20"/><path d="M7.500 7l5 5M12.500 7l-5 5" stroke="#c33" stroke-width="2"/></svg></button>
      <button aria-label="Shadows"><svg width="14" height="13" viewBox="0 0 14 13"><circle cx="5.500" cy="5" r="4" fill="#cfe3f3" stroke="#46769e"/><path d="M2 11.500h6" stroke="#555" stroke-width="1.500"/><path d="M7.500 7l5 5M12.500 7l-5 5" stroke="#c33" stroke-width="2"/></svg></button>
      <button aria-label="Crop view"><svg width="14" height="13" viewBox="0 0 14 13"><path d="M1 10V5h3V2h8v8" fill="#8ab0d0" stroke="#46607a"/><path d="M7.500 7l5 5M12.500 7l-5 5" stroke="#c33" stroke-width="2"/></svg></button>
      <button aria-label="Crop region"><svg width="14" height="13" viewBox="0 0 14 13"><path d="M1 11V6h3V3h5v8zM4 6v5" fill="#8ab0d0" stroke="#46607a"/><circle cx="11" cy="4" r="2.500" fill="#cfe3f8" stroke="#3878b8"/><path d="M11 6.500v4" stroke="#3878b8" stroke-width="1.500"/></svg></button>
      <button aria-label="Temporary hide"><svg width="14" height="12" viewBox="0 0 14 12"><path class="s" d="M1 3q2-2 4 3M9 5q1-3 4-1"/><circle class="s" cx="5" cy="7" r="2.200"/><circle class="s" cx="10" cy="6" r="2.200"/></svg></button>
      <button aria-label="Reveal hidden"><svg width="8" height="12" viewBox="0 0 8 12"><circle cx="4" cy="4" r="2.500" fill="#d8ebfb" stroke="#4a84bd"/><path d="M4 7v4" stroke="#4a84bd" stroke-width="1.800"/></svg></button>
      <button class="off" aria-label="View properties"><svg width="13" height="12" viewBox="0 0 13 12"><path class="s" d="M.5 2.500h11v7H.5zM7 6l4 4" stroke-dasharray="3 1"/></svg></button>
      <button class="off" aria-label="Analytical model"><svg width="12" height="12" viewBox="0 0 12 12"><path class="s" d="M1 11V5h4v6M5 3h5v7M1 8h8"/></svg></button>
      <button aria-label="Constraints"><svg width="14" height="12" viewBox="0 0 14 12"><path class="s" d="M1 0v11M12 0v5M1 2.500h11"/><path d="M6 6h7v5H6z" fill="#555"/></svg></button>
      <button aria-label="Scroll left"><svg width="6" height="8" viewBox="0 0 6 8"><path d="M4.500 1L1.500 4l3 3" fill="none" stroke="#333" stroke-width="1.300"/></svg></button>
      <div class="flex-grow-1 d-flex"><div class="thumb" style="width:14px;height:14px;margin-left:49%"></div></div>
      <button aria-label="Scroll right"><svg width="6" height="8" viewBox="0 0 6 8"><path d="M1.500 1l3 3-3 3" fill="none" stroke="#333" stroke-width="1.300"/></svg></button>
      <svg class="mt-1 me-1" width="10" height="10" viewBox="0 0 10 10"><path d="M8 1v8M5 4v5M2 7v2" stroke="#c0c0c0" stroke-width="2"/></svg>
    </div>
  </div>
</main>

<footer class="status d-flex align-items-center flex-shrink-0">
  <span class="msg">Click to enter move end point.</span>
  <svg class="i15" viewBox="0 0 15 15"><path d="M1 13V7h3v6zM6 13V4h3v9zM11 13V6h2v7M4 6l2-5 3 2" fill="#bbb" stroke="#888"/></svg>
  <div class="position-relative ms-1"><select class="w-ws" aria-label="Workset"><option></option></select><svg class="chev" width="7" height="5" viewBox="0 0 7 5"><path d="M1 1l2.500 2.500L6 1" fill="none" stroke="#bbb"/></svg></div>
  <svg class="i15 ms-2" viewBox="0 0 15 15"><path d="M3 1h9v3L8 8v2l-5 4 2-6-2-4z" fill="#aaa"/></svg><span>:0</span>
  <svg class="i15 ms-3" viewBox="0 0 15 15"><path d="M1.500 1.500h12v12h-12z" fill="#f0f0f0" stroke="#444"/><path d="M1.500 3h12" stroke="#444" stroke-width="2"/><path d="M4 6v6M4 7h3M4 10.500h3M8 7h4M8 10.500h4" stroke="#345"/></svg>
  <svg class="i15 mx-1" viewBox="0 0 15 15"><path d="M3 1h10v12H3z" fill="#9a9a9a"/><path d="M1 12q6 0 6-6" fill="none" stroke="#777" stroke-width="2"/></svg>
  <div class="position-relative"><select class="w-mm" aria-label="Design option" disabled><option>Main Model</option></select><svg class="chev" width="7" height="5" viewBox="0 0 7 5"><path d="M1 1l2.500 2.500L6 1" fill="none" stroke="#aaa"/></svg></div>
  <div class="picks ms-auto d-flex align-items-center pe-5">
    <svg class="i15" viewBox="0 0 15 15"><path d="M1 2h12v3H9v3H5V5H1z" fill="#efc13d" stroke="#a47c15"/><path d="M7 5v8l2-2 1.500 3 1-.5-1.500-3h3z" fill="#fff" stroke="#333"/></svg>
    <svg class="i15" viewBox="0 0 15 15"><path d="M1 11l6-7v9zM1 11h7" fill="#bcdcf4" stroke="#3878b8"/><path d="M8 1l5 5M13 1L8 6" stroke="#c33" stroke-width="2"/><path d="M8 6v7l2-2 1.500 3 1-.5-1.500-3h3z" fill="#fff" stroke="#333"/></svg>
    <svg class="i15" viewBox="0 0 15 15"><path d="M2 1.500h8v4H8v3H4v-3H2zM6 8v5" fill="#f2a05c" stroke="#b4521c"/><path d="M8 6v7l2-2 1.500 3 1-.5-1.500-3h3z" fill="#fff" stroke="#333"/></svg>
    <svg class="i15" viewBox="0 0 15 15"><path d="M2 3l6-2v10l-6 2z" fill="#bcdcf4" stroke="#3878b8"/><path d="M8 1l5 5M13 1L8 6" stroke="#c33" stroke-width="2"/><path d="M8 6v7l2-2 1.500 3 1-.5-1.500-3h3z" fill="#fff" stroke="#333"/></svg>
    <svg class="i15" viewBox="0 0 15 15"><path d="M5 0v10M0 5h10" stroke="#333" stroke-width="1.500"/><path d="M8 5v8l2-2 1.500 3 1-.5-1.500-3h3z" fill="#fff" stroke="#333"/></svg>
    <svg class="i15" viewBox="0 0 15 15"><circle cx="7.500" cy="7.500" r="4.500" fill="none" stroke="#999" stroke-width="3"/></svg>
    <div class="d-flex align-items-center"><svg class="i15" viewBox="0 0 15 15"><path d="M1.500 2h12l-4.500 6v5l-3-1.500V8z" fill="#b9c0c8" stroke="#444"/></svg>:0</div>
  </div>
</footer>
<script src="https://cdn.jsdelivr.net/npm/bootstrap@5.3.0/dist/js/bootstrap.bundle.min.js"></script>
</body>
</html>
